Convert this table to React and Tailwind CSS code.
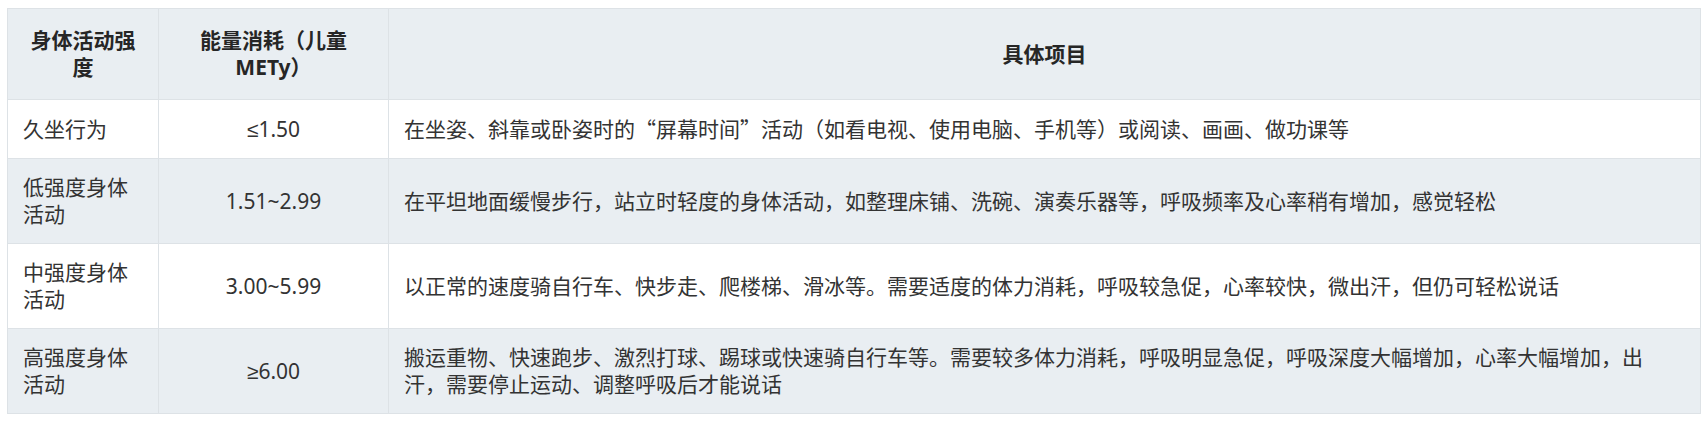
const cjk = "font-['Noto_Sans_CJK_SC',sans-serif]"
const sym = "font-['Liberation_Sans','DejaVu_Sans',sans-serif]"

const rows = [
  {
    level: '久坐行为',
    met: <><span className={sym}>≤</span>1.50</>,
    detail: (
      <span>
        在坐姿、斜靠或卧姿时的<span className={cjk}>“</span>屏幕时间<span className={cjk}>”</span>活动（如看电视、使用电脑、手机等）或阅读、画画、做功课等
      </span>
    ),
  },
  {
    level: '低强度身体活动',
    met: '1.51~2.99',
    detail: '在平坦地面缓慢步行，站立时轻度的身体活动，如整理床铺、洗碗、演奏乐器等，呼吸频率及心率稍有增加，感觉轻松',
  },
  {
    level: '中强度身体活动',
    met: '3.00~5.99',
    detail: '以正常的速度骑自行车、快步走、爬楼梯、滑冰等。需要适度的体力消耗，呼吸较急促，心率较快，微出汗，但仍可轻松说话',
  },
  {
    level: '高强度身体活动',
    met: <><span className={sym}>≥</span>6.00</>,
    detail: '搬运重物、快速跑步、激烈打球、踢球或快速骑自行车等。需要较多体力消耗，呼吸明显急促，呼吸深度大幅增加，心率大幅增加，出汗，需要停止运动、调整呼吸后才能说话',
  },
]

const cell = 'flex items-center border-r border-b border-[#dde2e6] px-[15px] py-[15px]'
const head = 'flex items-center justify-center text-center border-r border-b border-[#dde2e6] px-[15px] py-[18px] font-bold text-[#262626]'

export default function App() {
  return (
    <div className="bg-white w-[1708px] h-[422px] pt-[8px] pl-[7px] font-['Noto_Sans','Noto_Sans_CJK_SC',sans-serif] text-[21px] leading-[27px] text-[#333]">
      <div className="grid grid-cols-[151px_230px_1312px] w-[1694px] border-l border-t border-[#dde2e6]">
        <div className={`${head} bg-[#e9eef2]`}>身体活动强度</div>
        <div className={`${head} bg-[#e9eef2]`}>能量消耗（儿童METy）</div>
        <div className={`${head} bg-[#e9eef2]`}>具体项目</div>

        {rows.map((r, i) => {
          const bg = i % 2 === 1 ? 'bg-[#e9eef2]' : 'bg-white'
          return [
            <div key={`a${i}`} className={`${cell} ${bg}`}>{r.level}</div>,
            <div key={`b${i}`} className={`${cell} ${bg} justify-center text-center`}>{r.met}</div>,
            <div key={`c${i}`} className={`${cell} ${bg} pr-[16px]`}>{r.detail}</div>,
          ]
        })}
      </div>
    </div>
  )
}
